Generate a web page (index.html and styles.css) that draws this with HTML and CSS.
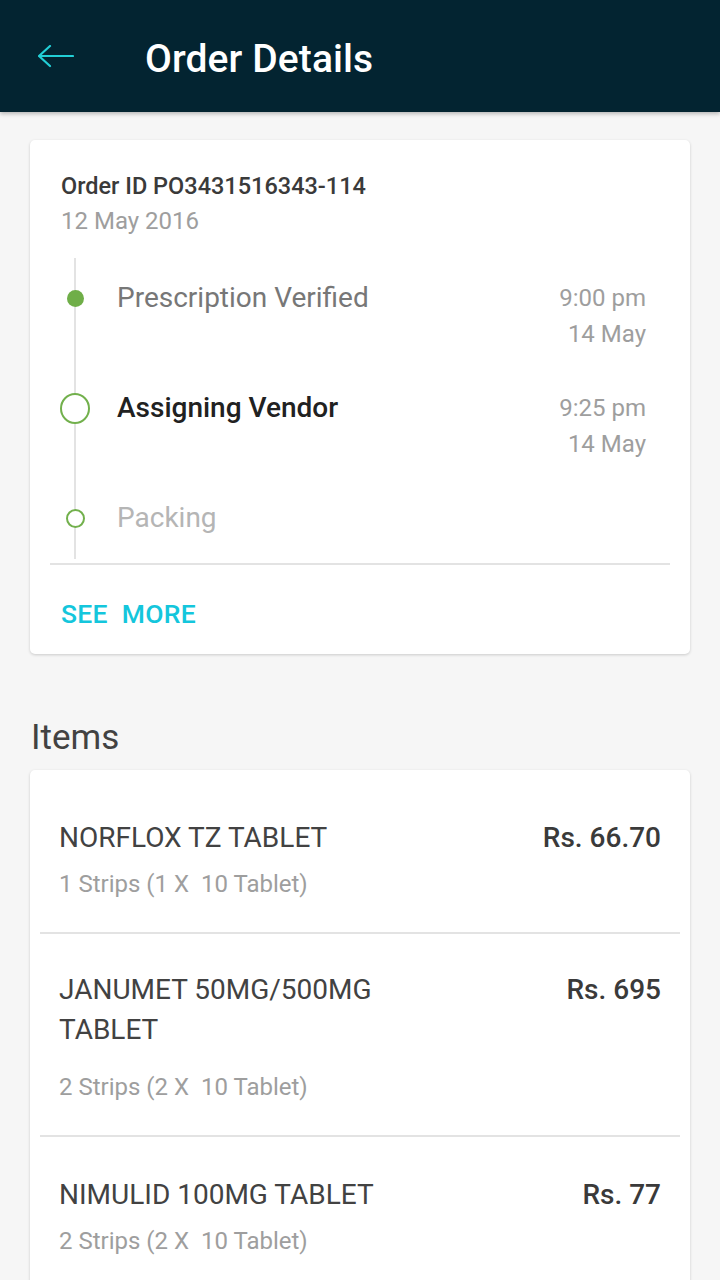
FILE: index.html
```html
<!DOCTYPE html>
<html>
<head>
<meta charset="utf-8">
<link rel="stylesheet" href="styles.css">
</head>
<body>
<header class="appbar">
  <svg class="back" width="36" height="24" viewBox="0 0 36 24">
    <path d="M1 11 H35 M1 11 L12 1 M1 11 L12 21" fill="none" stroke="#22cfd6" stroke-width="2.2" stroke-linecap="round" stroke-linejoin="round"/>
  </svg>
  <h1 class="title">Order Details</h1>
</header>
<main class="content">
  <section class="card order">
    <div class="order-id">Order ID PO3431516343-114</div>
    <div class="order-date">12 May 2016</div>
    <div class="timeline">
      <div class="step">
        <span class="marker"><span class="dot dot-done"></span></span>
        <span class="step-name done">Prescription Verified</span>
        <span class="step-time">9:00 pm<br>14 May</span>
      </div>
      <div class="step">
        <span class="marker"><span class="dot dot-current"></span></span>
        <span class="step-name current">Assigning Vendor</span>
        <span class="step-time">9:25 pm<br>14 May</span>
      </div>
      <div class="step step-last">
        <span class="marker"><span class="dot dot-next"></span></span>
        <span class="step-name next">Packing</span>
        <span class="step-time"></span>
      </div>
    </div>
    <div class="divider"></div>
    <div class="see-more">SEE&nbsp; MORE</div>
  </section>

  <h2 class="section-title">Items</h2>
  <section class="card items">
    <div class="item">
      <div class="item-head">
        <div class="item-name">NORFLOX TZ TABLET</div>
        <div class="item-price">Rs. 66.70</div>
      </div>
      <div class="item-qty">1 Strips (1 X&nbsp; 10 Tablet)</div>
    </div>
    <div class="item item-wrap">
      <div class="item-head">
        <div class="item-name">JANUMET 50MG/500MG<br>TABLET</div>
        <div class="item-price">Rs. 695</div>
      </div>
      <div class="item-qty">2 Strips (2 X&nbsp; 10 Tablet)</div>
    </div>
    <div class="item">
      <div class="item-head">
        <div class="item-name">NIMULID 100MG TABLET</div>
        <div class="item-price">Rs. 77</div>
      </div>
      <div class="item-qty">2 Strips (2 X&nbsp; 10 Tablet)</div>
    </div>
  </section>
</main>
</body>
</html>
```
FILE: styles.css
```css
* { box-sizing: border-box; }
html, body { margin: 0; padding: 0; }
body {
  width: 720px;
  height: 1280px;
  overflow: hidden;
  background: #f6f6f6;
  font-family: Roboto, "Noto Sans", sans-serif;
}
.appbar {
  height: 112px;
  background: #032431;
  display: flex;
  align-items: center;
  padding-left: 38px;
  box-shadow: 0 2px 4px rgba(0,0,0,0.25);
  position: relative;
  z-index: 2;
}
.back { display: block; margin-top: 2px; }
.title {
  margin: 6px 0 0 71px;
  color: #ffffff;
  font-size: 39px;
  line-height: 48px;
  font-weight: 500;
  letter-spacing: 0.1px;
}
.content {
  padding: 28px 30px 0;
}
.card {
  background: #ffffff;
  border-radius: 5px;
  box-shadow: 0 1px 3px rgba(0,0,0,0.18);
}
.order {
  padding-top: 31px;
  padding-bottom: 23px;
}
.order-id {
  padding-left: 31px;
  font-size: 23.5px;
  line-height: 30px;
  font-weight: 500;
  color: #3a3a3a;
}
.order-date {
  padding-left: 31px;
  font-size: 24px;
  line-height: 40px;
  color: #9e9e9e;
}
.timeline {
  position: relative;
  margin-top: 17px;
  padding: 22px 44px 23px 30px;
}
.timeline::before {
  content: "";
  position: absolute;
  left: 44px;
  top: 0;
  bottom: 0;
  width: 2px;
  background: #e3e3e3;
}
.step {
  display: grid;
  grid-template-columns: 30px 1fr auto;
  column-gap: 27px;
  height: 110px;
  align-items: start;
}
.step-last { height: 36px; }
.marker {
  height: 36px;
  display: flex;
  align-items: center;
  justify-content: center;
  position: relative;
  z-index: 1;
}
.dot { display: block; border-radius: 50%; background: #fff; }
.dot-done { width: 17px; height: 17px; background: #6fae48; }
.dot-current { width: 31px; height: 31px; border: 2px solid #72b04c; }
.dot-next { width: 19px; height: 19px; border: 2px solid #72b04c; }
.step-name {
  font-size: 28px;
  line-height: 36px;
}
.step-name.done { color: #777777; }
.step-name.current { color: #212121; font-weight: 500; }
.step-name.next { color: #b5b5b5; }
.step-time {
  font-size: 24px;
  line-height: 36px;
  color: #9e9e9e;
  text-align: right;
}
.divider {
  height: 2px;
  background: #e3e3e3;
  margin: 4px 20px 0;
}
.see-more {
  padding-left: 31px;
  margin-top: 32px;
  font-size: 26.5px;
  line-height: 34px;
  font-weight: 500;
  color: #14c6dc;
  letter-spacing: 0.3px;
}
.section-title {
  margin: 62px 0 10px 1px;
  font-size: 35px;
  line-height: 44px;
  font-weight: 400;
  color: #424242;
}
.items {
  padding: 12px 10px 0;
  border-radius: 5px 5px 0 0;
}
.item {
  padding: 36px 19px 33px;
  border-bottom: 2px solid #e3e3e3;
}
.item:last-child { border-bottom: none; padding-top: 38px; }
.item-head {
  display: flex;
  justify-content: space-between;
  align-items: flex-start;
}
.item-name {
  font-size: 28px;
  line-height: 40px;
  color: #424242;
}
.item-price {
  font-size: 28px;
  line-height: 40px;
  font-weight: 500;
  color: #3a3a3a;
}
.item-qty {
  margin-top: 11px;
  font-size: 24px;
  line-height: 30px;
  color: #9e9e9e;
}
.item-wrap .item-qty { margin-top: 22px; }
```
